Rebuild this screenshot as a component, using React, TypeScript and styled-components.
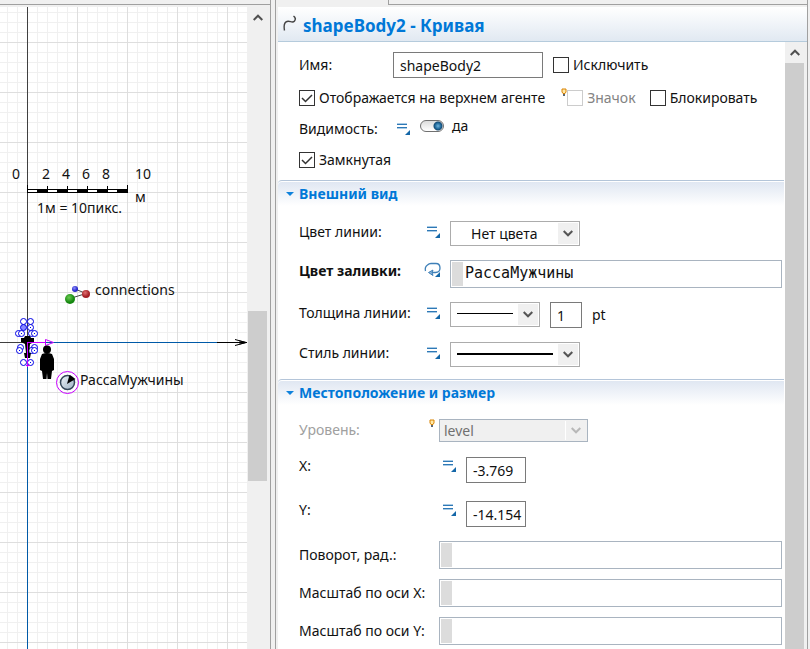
import React, { useId, useState } from "react";
import styled, { createGlobalStyle, css } from "styled-components";

const sans = `"Noto Sans", "Open Sans", sans-serif`;
const mono = `"DejaVu Sans Mono", monospace`;

const GlobalStyle = createGlobalStyle`
  *, *::before, *::after { box-sizing: border-box; }
  html, body { margin: 0; background: #f0f0f0; }
  body { font: 14px/20px ${sans}; color: #111; overflow: hidden; }
  input, select, button { font: inherit; color: inherit; margin: 0; }
`;

/* ---------- window frame ---------- */

const Page = styled.div`
  display: grid;
  grid-template-columns: minmax(0, 1fr) minmax(0, 2fr);
  height: 100vh;
`;

const EditorPane = styled.section`
  display: flex;
  flex-direction: column;
  min-height: 0;
`;

const PaneEdge = styled.div`
  flex: none;
  height: 7px;
  background: linear-gradient(#a0a0a0, #a0a0a0) 0 4px / 100% 1px no-repeat;
`;

const TabEdge = styled.div`
  flex: none;
  height: 7px;
  display: flex;
  padding-left: 110px;
`;

const TabGap = styled.div`
  flex: 1;
  height: 5px;
  border: solid #a0a0a0;
  border-width: 0 0 1px 1px;
`;

const EditorBody = styled.div`
  display: flex;
  flex: 1;
  min-height: 0;
  padding-right: 3px;
`;

const PropertiesPane = styled.section`
  display: flex;
  min-width: 0;
  min-height: 0;
  border-left: 1px solid #a0a0a0;
  padding: 0 2px 0 4px;
`;

const PropertiesFrame = styled.div`
  display: flex;
  flex-direction: column;
  flex: 1;
  min-width: 0;
  min-height: 0;
  border: solid #a0a0a0;
  border-width: 0 1px;
  padding-left: 2px;
`;

const PropertiesBody = styled.div`
  display: flex;
  flex: 1;
  min-height: 0;
  padding-right: 3px;
`;

/* ---------- scroll bars ---------- */

const Track = styled.div`
  flex: 0 0 19px;
  display: flex;
  flex-direction: column;
  background: #f0f0f0;
`;

const ScrollButton = styled.button`
  flex: 0 0 21px;
  display: grid;
  place-items: center;
  padding: 0;
  border: 0;
  background: none;
`;

const Spacer = styled.div<{ $grow: number }>`
  flex: ${(p) => p.$grow} 1 0;
`;

const Thumb = styled.div<{ $grow: number }>`
  flex: ${(p) => p.$grow} 1 0;
  background: #cdcdcd;
`;

function Scrollbar({ before, size, after }: { before: number; size: number; after: number }) {
  return (
    <Track>
      <ScrollButton aria-label="Вверх">
        <svg width="10" height="7" viewBox="0 0 10 7" fill="none" stroke="#505050" strokeWidth="2">
          <path d="M0.7 6 5 1.7 9.3 6" />
        </svg>
      </ScrollButton>
      <Spacer $grow={before} />
      <Thumb $grow={size} />
      <Spacer $grow={after} />
    </Track>
  );
}

/* ---------- canvas ---------- */

const Canvas = styled.div`
  position: relative;
  flex: 1;
  min-width: 0;
  margin-right: 1px;
  overflow: hidden;
  background-color: #fff;
  background-image:
    linear-gradient(90deg, #dedede 1px, transparent 1px),
    linear-gradient(#dedede 1px, transparent 1px),
    linear-gradient(90deg, #f0f0f0 1px, transparent 1px),
    linear-gradient(#f0f0f0 1px, transparent 1px);
  background-size: 50px 50px, 50px 50px, 10px 10px, 10px 10px;
  background-position: 27px 35px, 27px 35px, 7px 5px, 7px 5px;
`;

const Drawing = styled.svg`
  display: block;
  position: absolute;
  inset: 0;
`;

const CanvasLabel = styled.span<{ $x: number; $y: number }>`
  position: absolute;
  left: ${(p) => p.$x}px;
  top: ${(p) => p.$y}px;
  white-space: nowrap;
`;

const labels: [string, number, number][] = [
  ["0", 12, 157], ["2", 42, 157], ["4", 62, 157], ["6", 82, 157], ["8", 102, 157], ["10", 135, 157],
  ["м", 135, 180], ["1м = 10пикс.", 37, 191], ["connections", 95, 273], ["РассаМужчины", 80, 363],
];

const handles: [number, number][] = [
  [23, 321], [30, 321], [30, 327], [18, 333], [21, 333], [31, 333], [34, 333], [20, 347],
  [19, 350], [34, 347], [31, 350], [34, 350], [23, 362], [30, 362],
];

function ModelCanvas() {
  return (
    <Canvas>
      <Drawing width="247" height="1200" viewBox="0 7 247 1200" aria-hidden="true">
        <defs>
          <radialGradient id="blue" cx=".4" cy=".35"><stop offset="0" stopColor="#8f8fff" /><stop offset="1" stopColor="#2525c8" /></radialGradient>
          <radialGradient id="red" cx=".4" cy=".35"><stop offset="0" stopColor="#e07070" /><stop offset="1" stopColor="#a31f25" /></radialGradient>
          <radialGradient id="green" cx=".4" cy=".35"><stop offset="0" stopColor="#6acb50" /><stop offset="1" stopColor="#158710" /></radialGradient>
          <linearGradient id="steel" x2="1" y2="1"><stop offset="0" stopColor="#f0f6fb" /><stop offset="1" stopColor="#9cb0c2" /></linearGradient>
        </defs>

        <g shapeRendering="crispEdges">
          <rect x="27" y="7" width="1" height="335" fill="#404040" />
          <rect x="0" y="342" width="27" height="1" fill="#404040" />
          <rect x="27" y="342" width="1" height="865" fill="#005aa8" />
          <rect x="27" y="342" width="190" height="1" fill="#005aa8" />
          <rect x="217" y="342" width="30" height="1" fill="#000" />
          <rect x="27" y="189" width="101" height="4" fill="#000" />
          <path d="M28 191h9M48 191h9M68 191h9M88 191h9M108 191h9" stroke="#fff" strokeWidth="2" />
          <path d="M27.5 185v4M47.5 186v3M67.5 186v3M87.5 186v3M107.5 186v3M127.5 185v4" stroke="#000" />
        </g>
        <path d="M235 339.5 246 342.5 235 345.5M239 340.8 246 342.5 239 344.2" fill="none" stroke="#000" />

        <path d="M75 289 86 293.5 70 298.5" fill="none" stroke="#444" />
        <circle cx="75" cy="289" r="3" fill="url(#blue)" />
        <circle cx="86" cy="294" r="4" fill="url(#red)" />
        <circle cx="70" cy="299" r="5" fill="url(#green)" />

        <g fill="#fff" stroke="#0000e6">
          {handles.map(([x, y]) => <circle key={`${x}-${y}`} cx={x + 0.5} cy={y + 0.5} r="3" />)}
        </g>
        <circle cx="23.5" cy="327.5" r="3" fill="#8888ff" stroke="#0000e6" />
        <path d="M21 333.5h1M34 333.5h1M19 350.5h1M34 350.5h1M30 327.5h1M30 362.5h1" stroke="#0000e6" />
        <path d="M21 338h3l1-2h5l1 2h3v4l-4 2-1 9h2l-1 5h-5l-1-5h2l-1-9-4-2z" fill="#000" />
        <path d="M27.5 342v25M28 342.5h17M45.5 339.5l8 3-8 3zM26 365.5h4" fill="none" stroke="#c800ff" />

        <g fill="#000">
          <circle cx="47" cy="349.5" r="4" />
          <path d="M42 354q5-2 10 0l2 5v11l-2 1-1 8h-3.5l-.5-6-.5 6H43l-1-8-2-1v-11z" />
        </g>

        <circle cx="67.5" cy="382.5" r="11" fill="none" stroke="#c800ff" />
        <circle cx="67.5" cy="382.5" r="7" fill="url(#steel)" stroke="#344658" strokeWidth="1.5" />
        <path d="M67 384 69.500 375 75.500 379z" fill="#000" />
      </Drawing>
      {labels.map(([text, x, y]) => (
        <CanvasLabel key={text} $x={x} $y={y}>{text}</CanvasLabel>
      ))}
    </Canvas>
  );
}

/* ---------- property controls ---------- */

const Header = styled.header`
  flex: none;
  display: flex;
  align-items: center;
  gap: 6px;
  height: 35px;
  padding: 2px 0 0 5px;
  background: linear-gradient(#fff, #e1e9f2);
  border-bottom: 1px solid #b5cbdc;
  svg { margin-bottom: 3px; }
`;

const Title = styled.h1`
  margin: 0;
  padding-top: 2px;
  font-size: 17px;
  line-height: 24px;
  font-weight: 700;
  color: #0078d7;
`;

const Form = styled.form`
  flex: 1;
  min-width: 0;
  overflow: hidden;
  background: #fff;
`;

const General = styled.div`
  display: flex;
  flex-direction: column;
  gap: 10px;
  padding: 10px 3px 10px 21px;
`;

const Row = styled.div<{ $top?: boolean }>`
  display: flex;
  align-items: ${(p) => (p.$top ? "flex-start" : "center")};
  white-space: nowrap;
`;

const Caption = styled.label<{ $width: number; $line?: number; $bold?: boolean; $muted?: boolean }>`
  flex: 0 0 ${(p) => p.$width}px;
  line-height: ${(p) => p.$line ?? 22}px;
  font-weight: ${(p) => (p.$bold ? 700 : 400)};
  ${(p) => p.$muted && css`color: #a0a0a0;`}
`;

const CheckLabel = styled.label<{ $muted?: boolean }>`
  display: flex;
  align-items: center;
  gap: 4px;
  ${(p) => p.$muted && css`color: #838383;`}
`;

const tick = `url("data:image/svg+xml,%3Csvg xmlns='http://www.w3.org/2000/svg' width='14' height='14' fill='none' stroke='%23333' stroke-width='1.5'%3E%3Cpath d='M2 7l3.5 3.5L12 4'/%3E%3C/svg%3E")`;

const Box = styled.input`
  appearance: none;
  flex: none;
  width: 16px;
  height: 16px;
  border: 1px solid #333;
  background: #fff;
  &:checked { background-image: ${tick}; }
  &:disabled { border-color: #ccc; }
`;

const TextInput = styled.input<{ $width: number }>`
  width: ${(p) => p.$width}px;
  height: 26px;
  padding: 0 0 0 6px;
  border: 1px solid #7a7a7a;
  background: #fff;
`;

const Gap = styled.div<{ $size: number }>`
  flex: 0 0 ${(p) => p.$size}px;
`;

const IconButton = styled.button<{ $line: number }>`
  flex: 0 0 23px;
  height: ${(p) => p.$line}px;
  padding: 0;
  border: 0;
  background: none;
  text-align: left;
  svg { display: block; overflow: visible; }
`;

const StaticIcon = () => (
  <svg width="14" height="14" viewBox="0 0 14 14" aria-hidden="true">
    <path d="M0 1.5h10M0 6.5h10" stroke="#a9cbe6" />
    <path d="M0 2.5h10M0 5.5h10" stroke="#2e78b5" />
    <path d="M13 8v5H8z" fill="#1467a8" />
  </svg>
);

const DynamicIcon = () => (
  <svg width="14" height="14" viewBox="0 0 14 14" aria-hidden="true">
    <path d="M-1.500 7Q-2.500 3 .5 1 2-.5 4-.5H9Q13-.5 13 4 13 8.500 8.500 8.500H3" fill="none" stroke="#3f80b8" strokeWidth="1.300" />
    <path d="M6 6 1.500 8.500 6 11.500 5 8.500z" fill="#8fb8dc" stroke="#3f80b8" />
    <path d="M13 8v5H8z" fill="#1467a8" />
  </svg>
);

const BulbIcon = () => (
  <svg width="6" height="9" viewBox="0 0 6 9" aria-hidden="true">
    <path d="M1 1h4v3L4 5.5H2L1 4z" fill="#ffe9a8" stroke="#d98200" />
    <path d="M2 6h2v2H2z" fill="#5b6672" />
  </svg>
);

const BulbSlot = styled.span<{ $lead: number }>`
  flex: none;
  align-self: flex-start;
  padding-left: ${(p) => p.$lead}px;
  svg { display: block; }
`;

const Switch = styled.input`
  appearance: none;
  flex: none;
  width: 24px;
  height: 12px;
  border: 1px solid #707070;
  border-radius: 6px;
  background:
    radial-gradient(circle at 17px 5px, #6fb4dc 0, #1d6698 3px, #174c73 4px, transparent 5px),
    linear-gradient(#dcdcdc, #fff);
`;

const SwitchLabel = styled.label`
  display: flex;
  align-items: center;
  gap: 8px;
  line-height: 16px;
`;

const SelectWrap = styled.span<{ $width: number; $height: number; $muted?: boolean }>`
  position: relative;
  flex: none;
  display: block;
  width: ${(p) => p.$width}px;
  height: ${(p) => p.$height}px;
  border: 1px solid ${(p) => (p.$muted ? "#a9b4c0" : "#acacac")};
  background: ${(p) => (p.$muted ? "#f0f0f0" : "#fff")};
`;

const NativeSelect = styled.select<{ $indent: number }>`
  appearance: none;
  display: block;
  width: 100%;
  height: 100%;
  padding: 0 22px 0 ${(p) => p.$indent}px;
  border: 0;
  background: transparent;
  opacity: 1;
  &:disabled { color: #707070; }
`;

const Arrow = styled.span<{ $muted?: boolean }>`
  position: absolute;
  inset: 1px 1px 1px auto;
  width: 20px;
  display: grid;
  place-items: center;
  background: #f0f0f0;
  color: ${(p) => (p.$muted ? "#b8b8b8" : "#555")};
  box-shadow: -1px 0 ${(p) => (p.$muted ? "#fff" : "transparent")};
  pointer-events: none;
`;

const Stroke = styled.span<{ $weight: number }>`
  position: absolute;
  left: 6px;
  right: 26px;
  top: 10px;
  height: ${(p) => p.$weight}px;
  background: #000;
  pointer-events: none;
`;

function Select(props: {
  id: string; width: number; height?: number; text?: string; indent?: number; disabled?: boolean; stroke?: number;
}) {
  const { id, width, height = 25, text = "", indent = 4, disabled, stroke } = props;
  return (
    <SelectWrap $width={width} $height={height} $muted={disabled}>
      <NativeSelect id={id} $indent={indent} disabled={disabled}>
        <option>{text}</option>
      </NativeSelect>
      {stroke && <Stroke $weight={stroke} />}
      <Arrow $muted={disabled}>
        <svg width="10" height="7" viewBox="0 0 10 7" fill="none" stroke="currentColor" strokeWidth="2">
          <path d="M0.7 1 5 5.3 9.3 1" />
        </svg>
      </Arrow>
    </SelectWrap>
  );
}

const CodeField = styled.span`
  flex: 1;
  min-width: 0;
  display: flex;
  height: 28px;
  padding: 1px;
  border: 1px solid #a9b4c0;
  background: #fff;
  &::before { content: ""; flex: 0 0 11px; background: #dcdcdc; }
`;

const CodeInput = styled.input`
  flex: 1;
  min-width: 0;
  padding: 0 2px 2px;
  border: 0;
  background: none;
  font: 15px/20px ${mono};
`;

const Unit = styled.span`
  padding-left: 10px;
  line-height: 26px;
`;

const Section = styled.section`
  margin-right: 1px;
  border-top: 1px solid #b4c5d9;
  border-top-left-radius: 4px;
`;

const SectionTitle = styled.h2`
  margin: 1px 0 0;
  height: 24px;
  padding-left: 7px;
  border-top-left-radius: 4px;
  background: linear-gradient(#e0e7f2, #fff);
  font-size: 14px;
  line-height: 24px;
`;

const Toggle = styled.button`
  display: flex;
  align-items: center;
  gap: 4px;
  padding: 0;
  border: 0;
  background: none;
  font-weight: 700;
  color: #0078d7;
`;

const SectionRows = styled.div<{ $gap: number; $top: number; $bottom: number }>`
  display: flex;
  flex-direction: column;
  gap: ${(p) => p.$gap}px;
  padding: ${(p) => p.$top}px 2px ${(p) => p.$bottom}px 21px;
`;

function Check({ text, disabled, on = false }: { text: string; disabled?: boolean; on?: boolean }) {
  const id = useId();
  const [checked, setChecked] = useState(on);
  return (
    <CheckLabel htmlFor={id} $muted={disabled}>
      <Box id={id} type="checkbox" disabled={disabled} checked={checked} onChange={() => setChecked(!checked)} />
      {text}
    </CheckLabel>
  );
}

function SectionHead({ text }: { text: string }) {
  return (
    <SectionTitle>
      <Toggle type="button" aria-expanded="true">
        <svg width="10" height="6" viewBox="0 0 10 6" aria-hidden="true"><path d="M1 1h8L5 5z" fill="#0f82dc" /></svg>
        {text}
      </Toggle>
    </SectionTitle>
  );
}

function ModeButton({ dynamic, line = 22 }: { dynamic?: boolean; line?: number }) {
  return (
    <IconButton type="button" aria-label="Режим значения" $line={line}>
      {dynamic ? <DynamicIcon /> : <StaticIcon />}
    </IconButton>
  );
}

export default function App() {
  return (
    <>
      <GlobalStyle />
      <Page>
        <EditorPane>
          <PaneEdge />
          <EditorBody>
            <ModelCanvas />
            <Scrollbar before={283} size={170} after={168} />
          </EditorBody>
        </EditorPane>

        <PropertiesPane>
          <PropertiesFrame>
            <TabEdge><TabGap /></TabEdge>
            <Header>
              <svg width="14" height="17" viewBox="0 0 14 17" fill="none" stroke="#444" strokeWidth="1.4" aria-hidden="true">
                <path d="M1.5 15.5C.5 10 1 7.5 4 6.5 7 5.5 9.500 8.500 11.500 6 13 4 12.500 2.500 10.500 1" />
              </svg>
              <Title>shapeBody2 - Кривая</Title>
            </Header>
            <PropertiesBody>
              <Form>
                <General>
                  <Row>
                    <Caption htmlFor="name" $width={94}>Имя:</Caption>
                    <TextInput id="name" $width={150} defaultValue="shapeBody2" />
                    <Gap $size={10} />
                    <Check text="Исключить" />
                  </Row>
                  <Row>
                    <Check text="Отображается на верхнем агенте" on />
                    <BulbSlot $lead={16}><BulbIcon /></BulbSlot>
                    <Check text="Значок" disabled />
                    <Gap $size={14} />
                    <Check text="Блокировать" />
                  </Row>
                  <Row $top>
                    <Caption htmlFor="visible" $width={98}>Видимость:</Caption>
                    <ModeButton />
                    <SwitchLabel>
                      <Switch id="visible" type="checkbox" defaultChecked />
                      да
                    </SwitchLabel>
                  </Row>
                  <Row>
                    <Check text="Замкнутая" on />
                  </Row>
                </General>

                <Section>
                  <SectionHead text="Внешний вид" />
                  <SectionRows $gap={14} $top={15} $bottom={12}>
                    <Row $top>
                      <Caption htmlFor="line-color" $width={128}>Цвет линии:</Caption>
                      <ModeButton />
                      <Select id="line-color" width={130} text="Нет цвета" indent={20} />
                    </Row>
                    <Row $top>
                      <Caption htmlFor="fill-color" $width={128} $bold>Цвет заливки:</Caption>
                      <ModeButton dynamic />
                      <CodeField><CodeInput id="fill-color" defaultValue="РассаМужчины" /></CodeField>
                    </Row>
                    <Row $top>
                      <Caption htmlFor="line-width" $width={128}>Толщина линии:</Caption>
                      <ModeButton />
                      <Select id="line-width" width={90} stroke={1} />
                      <Gap $size={10} />
                      <TextInput aria-label="Толщина, pt" $width={32} defaultValue="1" />
                      <Unit>pt</Unit>
                    </Row>
                    <Row $top>
                      <Caption htmlFor="line-style" $width={128}>Стиль линии:</Caption>
                      <ModeButton />
                      <Select id="line-style" width={130} stroke={2} />
                    </Row>
                  </SectionRows>
                </Section>

                <Section>
                  <SectionHead text="Местоположение и размер" />
                  <SectionRows $gap={14} $top={14} $bottom={15}>
                    <Row $top>
                      <Caption htmlFor="level" $width={130} $muted>Уровень:</Caption>
                      <BulbSlot $lead={0}><BulbIcon /></BulbSlot>
                      <Gap $size={4} />
                      <Select id="level" width={149} height={23} text="level" disabled />
                    </Row>
                  </SectionRows>
                  <SectionRows $gap={18} $top={0} $bottom={14}>
                    <Row $top>
                      <Caption htmlFor="x" $width={144} $line={18}>X:</Caption>
                      <ModeButton line={18} />
                      <TextInput id="x" $width={60} defaultValue="-3.769" />
                    </Row>
                    <Row $top>
                      <Caption htmlFor="y" $width={144} $line={18}>Y:</Caption>
                      <ModeButton line={18} />
                      <TextInput id="y" $width={60} defaultValue="-14.154" />
                    </Row>
                  </SectionRows>
                  <SectionRows $gap={10} $top={0} $bottom={4}>
                    <Row>
                      <Caption htmlFor="rotation" $width={140}>Поворот, рад.:</Caption>
                      <CodeField><CodeInput id="rotation" /></CodeField>
                    </Row>
                    <Row>
                      <Caption htmlFor="scale-x" $width={140}>Масштаб по оси X:</Caption>
                      <CodeField><CodeInput id="scale-x" /></CodeField>
                    </Row>
                    <Row>
                      <Caption htmlFor="scale-y" $width={140}>Масштаб по оси Y:</Caption>
                      <CodeField><CodeInput id="scale-y" /></CodeField>
                    </Row>
                  </SectionRows>
                </Section>
              </Form>
              <Scrollbar before={0} size={586} after={0} />
            </PropertiesBody>
          </PropertiesFrame>
        </PropertiesPane>
      </Page>
    </>
  );
}
